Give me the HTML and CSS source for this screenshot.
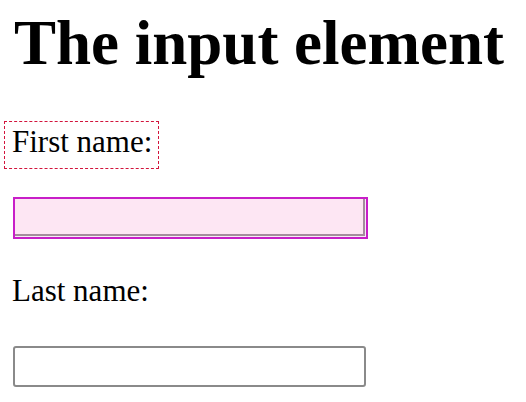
FILE: index.html
```html
<!DOCTYPE html>
<html lang="en">
<head>
    <meta charset="UTF-8">
    <meta name="viewport" content="width=device-width, initial-scale=1.0">
    <title>The input element</title>
    <link rel="stylesheet" href="styles.css">
</head>
<body>
    <h1 class="title">The input element</h1>
    <form class="name-form">
        <label class="field-label highlighted" for="fname">First name:</label>
        <input type="text" id="fname" class="text-input active-input">
        <label class="field-label" for="lname">Last name:</label>
        <input type="text" id="lname" class="text-input">
    </form>
</body>
</html>
```

FILE: styles.css
```css
body {
    margin: 0;
    padding: 0 12px;
    font-family: "Liberation Serif", "Times New Roman", serif;
    color: #000;
    background: #fff;
}
.title {
    margin: 8px 0 0 2px;
    font-size: 63px;
    font-weight: bold;
    line-height: 70px;
}
.name-form {
    display: flex;
    flex-direction: column;
    align-items: flex-start;
}
.field-label {
    font-size: 31px;
    line-height: 34px;
}
.highlighted {
    margin: 43px 0 0 -8px;
    padding: 3px 6px 9px 7px;
    border: 1px dashed #d2143c;
}
.text-input {
    box-sizing: border-box;
    margin: 0 0 0 1px;
    padding: 0;
    font: inherit;
    outline: none;
}
.active-input {
    width: 355px;
    height: 42px;
    margin-top: 28px;
    border: 2px solid #c81ec8;
    background: #fde6f3;
    box-shadow: inset -1px -1px 0 #f6eef4, inset -3px -3px 0 #a48c9c;
}
.field-label + .text-input + .field-label {
    margin-top: 35px;
}
.text-input:last-child {
    width: 353px;
    height: 41px;
    margin-top: 38px;
    border: 2px solid #8a8a8a;
    border-radius: 3px;
    background: #fff;
}
```
